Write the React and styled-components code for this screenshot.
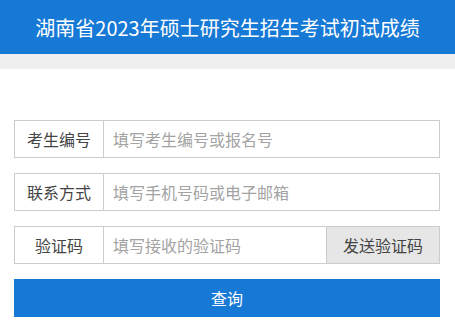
import styled, { createGlobalStyle } from 'styled-components'

const GlobalStyle = createGlobalStyle`
  * {
    box-sizing: border-box;
  }
  body {
    margin: 0;
    background: #fff;
    font-family: "Noto Sans CJK SC", "Noto Sans", sans-serif;
  }
`
const Header = styled.div`
  height: 54px;
  background-color: #1779d6;
  color: #fff;
  font-size: 20px;
  display: flex;
  align-items: center;
  justify-content: center;
`
const Band = styled.div`
  height: 15px;
  background-color: #efefef;
`
const Form = styled.div`
  padding: 51px 15px 0 14px;
  display: flex;
  flex-direction: column;
  gap: 15px;
`
const Row = styled.div`
  display: flex;
  height: 38px;
  border: 1px solid #cccccc;
`
const Label = styled.div`
  width: 89px;
  flex-shrink: 0;
  border-right: 1px solid #cccccc;
  display: flex;
  align-items: center;
  justify-content: center;
  font-size: 16px;
  color: #444;
`
const Field = styled.input`
  flex: 1;
  min-width: 0;
  border: none;
  outline: none;
  padding: 0 9px;
  font-family: inherit;
  font-size: 16px;
  color: #333;
  &::placeholder {
    color: #a3a3a3;
  }
`
const SendBtn = styled.div`
  width: 113px;
  flex-shrink: 0;
  border-left: 1px solid #cccccc;
  background-color: #e6e6e6;
  display: flex;
  align-items: center;
  justify-content: center;
  font-size: 16px;
  color: #444;
  cursor: pointer;
`
const QueryBtn = styled.div`
  height: 38px;
  background-color: #1779d6;
  color: #fff;
  font-size: 16px;
  display: flex;
  align-items: center;
  justify-content: center;
  cursor: pointer;
`

function App() {
  return (
    <>
      <GlobalStyle />
      <Header>湖南省2023年硕士研究生招生考试初试成绩</Header>
      <Band />
      <Form>
        <Row>
          <Label>考生编号</Label>
          <Field placeholder="填写考生编号或报名号" />
        </Row>
        <Row>
          <Label>联系方式</Label>
          <Field placeholder="填写手机号码或电子邮箱" />
        </Row>
        <Row>
          <Label>验证码</Label>
          <Field placeholder="填写接收的验证码" />
          <SendBtn>发送验证码</SendBtn>
        </Row>
        <QueryBtn>查询</QueryBtn>
      </Form>
    </>
  )
}
export default App
